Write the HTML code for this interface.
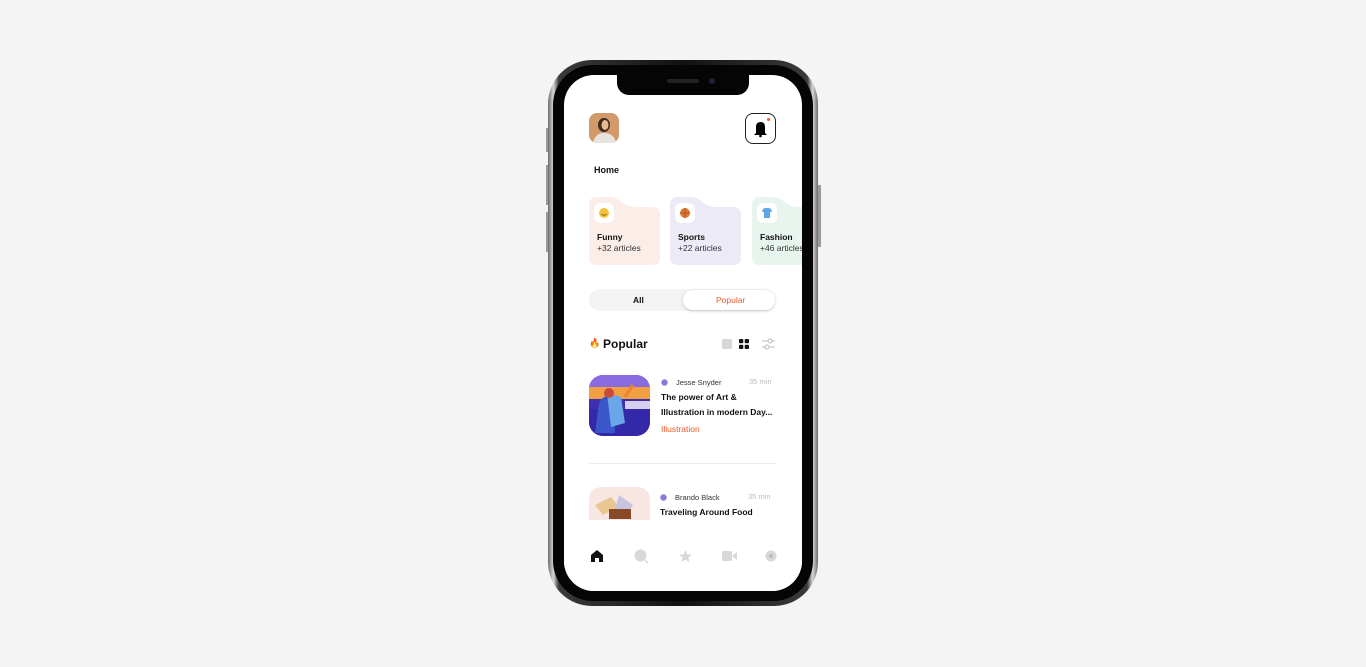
<!DOCTYPE html>
<html><head><meta charset="utf-8">
<style>
*{margin:0;padding:0;box-sizing:border-box}
body{width:1366px;height:667px;background:#f4f4f4;position:relative;overflow:hidden;font-family:"Liberation Sans",sans-serif;color:#111}
.phone{position:absolute;left:548px;top:60px;width:270px;height:546px;border-radius:44px;background:linear-gradient(90deg,#6b6b6b,#d8d8d8 2%,#3a3a3a 4%,#111 50%,#3a3a3a 96%,#d8d8d8 98%,#6b6b6b);}
.inner{position:absolute;left:5px;top:5px;right:5px;bottom:5px;border-radius:40px;background:#050505}
.screen{position:absolute;left:564px;top:75px;width:238px;height:516px;border-radius:30px;background:#fff;overflow:hidden}
.notch{position:absolute;left:53px;top:0;width:132px;height:20px;background:#050505;border-radius:0 0 12px 12px}
.abs{position:absolute}
.btn{position:absolute;background:#9a9a9a;width:3px}
.t{position:absolute;white-space:nowrap}
</style></head><body>
<div class="btn" style="left:546px;top:128px;height:24px"></div>
<div class="btn" style="left:546px;top:165px;height:40px"></div>
<div class="btn" style="left:546px;top:212px;height:40px"></div>
<div class="btn" style="left:818px;top:185px;height:62px"></div>
<div class="phone"><div class="inner"></div></div>
<div class="screen">
 <div class="notch"><div class="abs" style="left:50px;top:4px;width:32px;height:4px;border-radius:2px;background:#222"></div><div class="abs" style="left:92px;top:3px;width:6px;height:6px;border-radius:50%;background:#1a2236"></div></div>
 <div class="abs" style="left:25px;top:38px;width:30px;height:30px;border-radius:8px;background:#d29a68;overflow:hidden">
  <svg width="30" height="30"><ellipse cx="15" cy="12" rx="6" ry="7" fill="#3a2a22"/><ellipse cx="16" cy="12" rx="3.5" ry="5" fill="#e6b88f"/><path d="M4 30 Q6 20 15 20 Q25 20 27 30Z" fill="#e8e4dd"/></svg>
 </div>
 <div class="abs" style="left:181px;top:38px;width:31px;height:31px;border-radius:8px;border:1px solid #222;background:#fff">
  <svg width="29" height="29"><path d="M10 19 L10 13 Q10 8 14.5 8 Q19 8 19 13 L19 19 L21 21 L8 21Z" fill="#000"/><circle cx="14.5" cy="22" r="1.3" fill="#000"/><circle cx="22.5" cy="5.5" r="1.5" fill="#f05a28"/></svg>
 </div>
 <div class="t" style="left:30px;top:90px;font-size:9px;font-weight:bold">Home</div>
 <svg class="abs" style="left:25px;top:122px" width="240" height="69">
  <path d="M0 8 Q0 0 8 0 L20 0 Q28 0 34 6 Q39 10 46 10 L63 10 Q71 10 71 18 L71 61 Q71 68 63 68 L8 68 Q0 68 0 60Z" fill="#fbede8"/>
  <path transform="translate(81,0)" d="M0 8 Q0 0 8 0 L20 0 Q28 0 34 6 Q39 10 46 10 L63 10 Q71 10 71 18 L71 61 Q71 68 63 68 L8 68 Q0 68 0 60Z" fill="#eceaf6"/>
  <path transform="translate(163,0)" d="M0 8 Q0 0 8 0 L20 0 Q28 0 34 6 Q39 10 46 10 L63 10 Q71 10 71 18 L71 61 Q71 68 63 68 L8 68 Q0 68 0 60Z" fill="#e8f5ee"/>
  <rect x="5" y="6" width="20" height="20" rx="6" fill="#fff"/><circle cx="15" cy="16" r="5" fill="#f5c23c"/><path d="M12.5 17 Q15 19.5 17.5 17" stroke="#7a4a10" fill="none" stroke-width=".8"/>
  <rect x="86" y="6" width="20" height="20" rx="6" fill="#fff"/><circle cx="96" cy="16" r="5" fill="#e07a32"/><path d="M91 16h10M96 11v10" stroke="#8a3a10" stroke-width=".6"/>
  <rect x="168" y="6" width="20" height="20" rx="6" fill="#fff"/><path d="M174 12 L176 11 L180 11 L182 12 L183 15 L181 15 L181 21 L175 21 L175 15 L173 15Z" fill="#5fa8e8"/>
 </svg>
 <div class="t" style="left:33px;top:157px;font-size:8.5px;font-weight:bold">Funny</div>
 <div class="t" style="left:33px;top:168px;font-size:8.5px;color:#333">+32 articles</div>
 <div class="t" style="left:114px;top:157px;font-size:8.5px;font-weight:bold">Sports</div>
 <div class="t" style="left:114px;top:168px;font-size:8.5px;color:#333">+22 articles</div>
 <div class="t" style="left:196px;top:157px;font-size:8.5px;font-weight:bold">Fashion</div>
 <div class="t" style="left:196px;top:168px;font-size:8.5px;color:#333">+46 articles</div>
 <div class="abs" style="left:25px;top:214px;width:186px;height:22px;border-radius:11px;background:#f3f3f3"></div>
 <div class="t" style="left:69px;top:220px;font-size:8.5px;font-weight:bold">All</div>
 <div class="abs" style="left:119px;top:215px;width:92px;height:20px;border-radius:10px;background:#fff;box-shadow:0 1px 3px rgba(0,0,0,.2)"></div>
 <div class="t" style="left:152px;top:220px;font-size:8.5px;color:#f05a28">Popular</div>
 <div class="t" style="left:25px;top:263px;font-size:9px">🔥</div>
 <div class="t" style="left:39px;top:262px;font-size:12px;font-weight:bold">Popular</div>
 <div class="abs" style="left:158px;top:264px;width:10px;height:10px;border-radius:2px;background:#d8d8d8"></div>
 <svg class="abs" style="left:175px;top:264px" width="10" height="10"><rect x="0" y="0" width="4.3" height="4.3" rx="1" fill="#111"/><rect x="5.7" y="0" width="4.3" height="4.3" rx="1" fill="#111"/><rect x="0" y="5.7" width="4.3" height="4.3" rx="1" fill="#111"/><rect x="5.7" y="5.7" width="4.3" height="4.3" rx="1" fill="#111"/></svg>
 <svg class="abs" style="left:198px;top:263px" width="13" height="12"><path d="M0 3h13M0 9h13" stroke="#bbb" stroke-width="1"/><circle cx="8" cy="3" r="2" fill="#fff" stroke="#bbb"/><circle cx="5" cy="9" r="2" fill="#fff" stroke="#bbb"/></svg>
 <svg class="abs" style="left:25px;top:300px" width="61" height="61"><defs><clipPath id="c1"><rect width="61" height="61" rx="14"/></clipPath></defs><g clip-path="url(#c1)"><rect width="61" height="61" fill="#3d2fb0"/><rect width="61" height="22" fill="#8a6ae0"/><rect y="12" width="61" height="12" fill="#f0a040"/><rect y="34" width="61" height="27" fill="#3328a8"/><path d="M10 28 Q18 14 26 28 L26 58 L6 58Z" fill="#3a56c8"/><path d="M18 18 L32 22 L36 48 L22 52Z" fill="#6aa6e8"/><circle cx="20" cy="18" r="5" fill="#c84a3a"/><rect x="36" y="26" width="25" height="8" fill="#d7cff0"/><path d="M36 22 L44 10" stroke="#f08030" stroke-width="3"/></g></svg>
 <svg class="abs" style="left:97px;top:304px" width="7" height="7"><circle cx="3.5" cy="3.5" r="3.2" fill="#8a7ad8"/></svg>
 <div class="t" style="left:112px;top:303px;font-size:7.5px;color:#333">Jesse Snyder</div>
 <div class="t" style="left:185px;top:302px;font-size:7.5px;color:#bbb">35 min</div>
 <div class="t" style="left:97px;top:317px;font-size:8.5px;font-weight:bold">The power of Art &amp;</div>
 <div class="t" style="left:97px;top:332px;font-size:8.5px;font-weight:bold">Illustration in modern Day...</div>
 <div class="t" style="left:97px;top:349px;font-size:8.5px;color:#f05a28">Illustration</div>
 <div class="abs" style="left:25px;top:388px;width:187px;height:1px;background:#ececec"></div>
 <svg class="abs" style="left:25px;top:412px" width="61" height="33"><defs><clipPath id="c2"><path d="M0 14 Q0 0 14 0 L47 0 Q61 0 61 14 L61 33 L0 33Z"/></clipPath></defs><g clip-path="url(#c2)"><rect width="61" height="33" fill="#f8e6e2"/><path d="M6 18 L22 10 L30 20 L14 28Z" fill="#e8c890"/><path d="M30 8 L44 18 L38 28 L26 22Z" fill="#c8c4e0"/><rect x="20" y="22" width="22" height="10" fill="#8a4a2a"/></g></svg>
 <svg class="abs" style="left:96px;top:419px" width="7" height="7"><circle cx="3.5" cy="3.5" r="3.2" fill="#8a7ad8"/></svg>
 <div class="t" style="left:111px;top:418px;font-size:7.5px;color:#333">Brando Black</div>
 <div class="t" style="left:184px;top:417px;font-size:7.5px;color:#bbb">35 min</div>
 <div class="t" style="left:96px;top:432px;font-size:8.5px;font-weight:bold">Traveling Around Food</div>
 <div class="abs" style="left:0;top:446px;width:238px;height:70px;background:#fff"></div>
 <svg class="abs" style="left:26px;top:474px" width="14" height="13"><path d="M1 6 L7 1 L13 6 L13 13 L9 13 L9 9 L5 9 L5 13 L1 13Z" fill="#111"/></svg>
 <svg class="abs" style="left:70px;top:474px" width="15" height="15"><circle cx="6.5" cy="6.5" r="6" fill="#d8d8d8"/><path d="M11 11 L14 14" stroke="#d8d8d8" stroke-width="1.5"/></svg>
 <svg class="abs" style="left:115px;top:475px" width="13" height="12"><path d="M6.5 0 L8.3 4.2 L13 4.6 L9.4 7.6 L10.5 12 L6.5 9.6 L2.5 12 L3.6 7.6 L0 4.6 L4.7 4.2Z" fill="#d8d8d8"/></svg>
 <svg class="abs" style="left:158px;top:476px" width="15" height="10"><rect width="10" height="10" rx="2" fill="#d8d8d8"/><path d="M10 5 L15 1 L15 9Z" fill="#d8d8d8"/></svg>
 <svg class="abs" style="left:201px;top:475px" width="12" height="12"><circle cx="6" cy="6" r="5.5" fill="#d8d8d8"/><circle cx="6" cy="6" r="2" fill="#bdbdbd"/></svg>
</div>
</body></html>
